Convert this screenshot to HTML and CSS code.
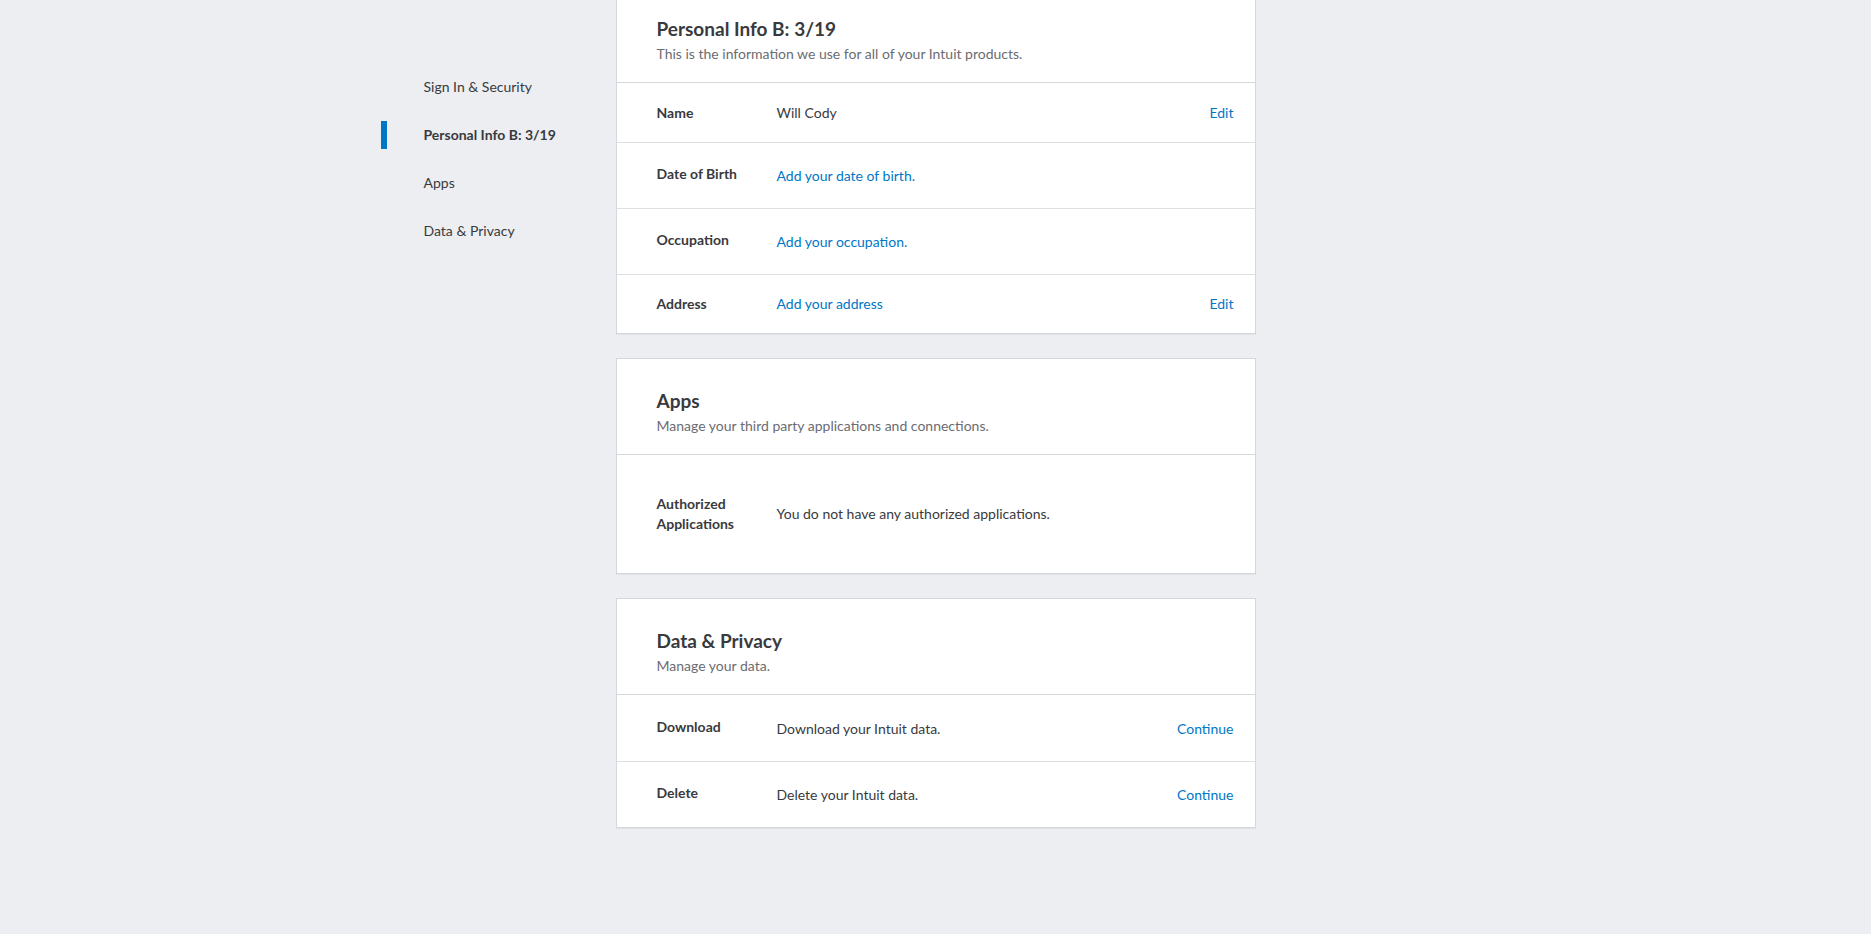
FILE: index.html
```html
<!DOCTYPE html>
<html lang="en">
<head>
<meta charset="utf-8">
<title>Profile</title>
<link rel="stylesheet" href="styles.css">
</head>
<body>
<div class="page">
  <nav class="sidebar">
    <a class="nav-item">Sign In &amp; Security</a>
    <a class="nav-item active">Personal Info B: 3/19</a>
    <a class="nav-item">Apps</a>
    <a class="nav-item">Data &amp; Privacy</a>
  </nav>
  <main class="main">
    <section class="card">
      <header class="card-head">
        <h2 class="card-title">Personal Info B: 3/19</h2>
        <p class="card-sub">This is the information we use for all of your Intuit products.</p>
      </header>
      <div class="row row-short">
        <div class="label">Name</div>
        <div class="value">Will Cody</div>
        <a class="action">Edit</a>
      </div>
      <div class="row row-tall">
        <div class="label label-up">Date of Birth</div>
        <a class="value link">Add your date of birth.</a>
      </div>
      <div class="row row-tall">
        <div class="label label-up">Occupation</div>
        <a class="value link">Add your occupation.</a>
      </div>
      <div class="row row-short">
        <div class="label">Address</div>
        <a class="value link">Add your address</a>
        <a class="action">Edit</a>
      </div>
    </section>

    <section class="card">
      <header class="card-head">
        <h2 class="card-title">Apps</h2>
        <p class="card-sub">Manage your third party applications and connections.</p>
      </header>
      <div class="row row-apps">
        <div class="label">Authorized<br>Applications</div>
        <div class="value">You do not have any authorized applications.</div>
      </div>
    </section>

    <section class="card">
      <header class="card-head">
        <h2 class="card-title">Data &amp; Privacy</h2>
        <p class="card-sub">Manage your data.</p>
      </header>
      <div class="row row-tall">
        <div class="label label-up">Download</div>
        <div class="value">Download your Intuit data.</div>
        <a class="action">Continue</a>
      </div>
      <div class="row row-tall">
        <div class="label label-up">Delete</div>
        <div class="value">Delete your Intuit data.</div>
        <a class="action">Continue</a>
      </div>
    </section>
  </main>
</div>
</body>
</html>
```
FILE: styles.css
```css
* { box-sizing: border-box; }
html, body { margin: 0; padding: 0; }
body {
  background: #eceef1;
  font-family: Lato, "Open Sans", "Liberation Sans", sans-serif;
  color: #393a3d;
  font-size: 14px;
  line-height: 20px;
  height: 934px;
  overflow: hidden;
}
.page {
  display: grid;
  grid-template-columns: 1fr 640px 1fr;
  margin-top: -14px;
}
.sidebar {
  justify-self: end;
  width: 235px;
  display: flex;
  flex-direction: column;
  padding-top: 77px;
}
.nav-item {
  display: flex;
  align-items: center;
  height: 48px;
  color: #393a3d;
  font-size: 14px;
  line-height: 20px;
  cursor: pointer;
}
.nav-item::before {
  content: "";
  flex: none;
  width: 6px;
  height: 28px;
  margin-right: 37px;
  background: transparent;
}
.nav-item.active { font-weight: 700; }
.nav-item.active::before { background: #0077c5; }
.main {
  display: flex;
  flex-direction: column;
  gap: 24px;
}
.card {
  background: #fff;
  border: 1px solid #d4d7dc;
  box-shadow: 0 1px 0 #dfe1e5;
}
.card-head {
  padding: 28px 40px 18px;
  border-bottom: 1px solid #d4d7dc;
}
.card-title {
  margin: 0;
  font-size: 19px;
  line-height: 28px;
  font-weight: 700;
  color: #393a3d;
}
.card-sub {
  margin: 1px 0 0;
  font-size: 14px;
  line-height: 20px;
  color: #6b6c72;
}
.row {
  display: flex;
  align-items: center;
  padding: 0 20px 0 40px;
  border-top: 1px solid #dcdfe3;
}
.card-head + .row { border-top: 0; }
.row-short { padding-top: 19px; padding-bottom: 19px; }
.card-head + .row-short { padding-top: 20px; }
.row-tall { padding-top: 23px; padding-bottom: 22px; }
.card-head + .row-tall { padding-top: 24px; }
.row-apps { padding-top: 39px; padding-bottom: 39px; }
.label {
  width: 120px;
  flex: none;
  font-weight: 700;
  color: #393a3d;
}
.label-up { position: relative; top: -2px; }
.value {
  flex: 1;
  color: #393a3d;
}
.link { color: #0077c5; cursor: pointer; }
.action {
  color: #0077c5;
  cursor: pointer;
  margin-right: 1px;
}
```
